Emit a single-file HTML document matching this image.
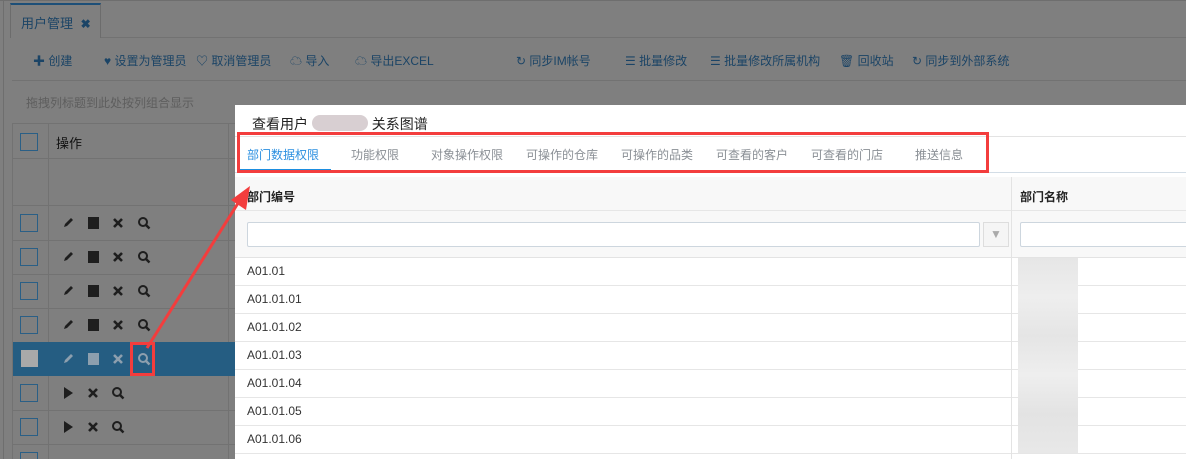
<!DOCTYPE html>
<html><head><meta charset="utf-8"><style>
*{margin:0;padding:0;box-sizing:border-box}
html,body{width:1186px;height:459px;overflow:hidden}
body{background:#7f7f7f;position:relative;font-family:"Liberation Sans","Noto Sans CJK SC",sans-serif;font-size:12px}
.a{position:absolute}
.tb span{position:absolute;top:52px;color:#1b4466;font-size:12px;white-space:nowrap}
.hl{position:absolute;height:1px;background:#727272}
.vl{position:absolute;width:1px;background:#727272}
.cb{position:absolute;left:20px;width:18px;height:18px;border:1px solid #2a5f86}
.ic{position:absolute;width:14px;height:14px}
.tab{position:absolute;top:146px;color:#8a8f95;font-size:12px;white-space:nowrap}
.row{position:absolute;left:235px;width:951px;height:28px;border-bottom:1px solid #e6e6e6}
.row span{position:absolute;left:12px;top:6px;color:#333;font-size:12px}
</style></head><body>
<svg width="0" height="0" style="position:absolute"><defs>
<g id="pen"><path d="M3 11 L4 8 L10 2 L12 4 L6 10 Z" fill="currentColor"/></g>
<g id="sq"><rect x="2" y="1" width="11" height="12" fill="currentColor"/></g>
<g id="x"><path d="M3 3 L11 11 M11 3 L3 11" stroke="currentColor" stroke-width="2.6"/></g>
<g id="mg"><circle cx="6" cy="6" r="4" fill="none" stroke="currentColor" stroke-width="2"/><path d="M9 9 L12.5 12.5" stroke="currentColor" stroke-width="2.4"/></g>
<g id="pl"><path d="M3 1 L12 7 L3 13 Z" fill="currentColor"/></g>
</defs></svg>
<div class="vl" style="left:3px;top:0;height:459px;background:#6e6e6e"></div>
<div class="hl" style="left:0;top:0;width:1186px;background:#6e6e6e"></div>
<div class="a" style="left:10px;top:3px;width:91px;height:35px;border:1px solid #6c6c6c;border-top:2px solid #1d4f78;border-bottom:none;background:#7f7f7f"></div>
<div class="hl" style="left:101px;top:37px;width:1085px"></div>
<div class="a" style="left:21px;top:13px;color:#1b4466;font-size:13px">用户管理 <b style="margin-left:4px;font-size:12px">✖</b></div>
<div class="tb">
<span style="left:33px">✚ 创建</span>
<span style="left:104px">♥ 设置为管理员</span>
<span style="left:196px">♡ 取消管理员</span>
<span style="left:290px">☁ 导入</span>
<span style="left:355px">☁ 导出EXCEL</span>
<span style="left:516px">↻ 同步IM帐号</span>
<span style="left:625px">☰ 批量修改</span>
<span style="left:710px">☰ 批量修改所属机构</span>
<span style="left:839px">🗑 回收站</span>
<span style="left:912px">↻ 同步到外部系统</span>
</div>
<div class="hl" style="left:12px;top:80px;width:1174px"></div>
<div class="a" style="left:26px;top:94px;color:#5e5e5e">拖拽列标题到此处按列组合显示</div>
<div class="hl" style="left:12px;top:123px;width:1174px"></div>
<div class="hl" style="left:12px;top:158px;width:1174px"></div>
<div class="hl" style="left:12px;top:205px;width:1174px"></div>
<div class="vl" style="left:12px;top:123px;height:336px"></div>
<div class="vl" style="left:48px;top:123px;height:336px"></div>
<div class="vl" style="left:228px;top:123px;height:336px"></div>
<div class="cb" style="top:133px"></div>
<div class="a" style="left:56px;top:133px;color:#111;font-size:13px">操作</div>
<div class="hl" style="left:12px;top:240px;width:223px"></div>
<div class="hl" style="left:12px;top:274px;width:223px"></div>
<div class="hl" style="left:12px;top:308px;width:223px"></div>
<div class="hl" style="left:12px;top:342px;width:223px"></div>
<div class="hl" style="left:12px;top:410px;width:223px"></div>
<div class="hl" style="left:12px;top:444px;width:223px"></div>
<div class="a" style="left:13px;top:342px;width:222px;height:34px;background:#255d82"></div>
<svg class="a" style="left:0;top:0;color:#1e1e1e" width="240" height="459">
<g transform="translate(61,216)"><use href="#pen"/></g><g transform="translate(86,216)"><use href="#sq"/></g><g transform="translate(111,216)"><use href="#x"/></g><g transform="translate(137,216)"><use href="#mg"/></g>
<g transform="translate(61,250)"><use href="#pen"/></g><g transform="translate(86,250)"><use href="#sq"/></g><g transform="translate(111,250)"><use href="#x"/></g><g transform="translate(137,250)"><use href="#mg"/></g>
<g transform="translate(61,284)"><use href="#pen"/></g><g transform="translate(86,284)"><use href="#sq"/></g><g transform="translate(111,284)"><use href="#x"/></g><g transform="translate(137,284)"><use href="#mg"/></g>
<g transform="translate(61,318)"><use href="#pen"/></g><g transform="translate(86,318)"><use href="#sq"/></g><g transform="translate(111,318)"><use href="#x"/></g><g transform="translate(137,318)"><use href="#mg"/></g>
<g style="color:#8d9fae"><g transform="translate(61,352)"><use href="#pen"/></g><g transform="translate(86,352)"><use href="#sq"/></g><g transform="translate(111,352)"><use href="#x"/></g><g transform="translate(137,352)"><use href="#mg"/></g></g>
<g transform="translate(61,386)"><use href="#pl"/></g><g transform="translate(86,386)"><use href="#x"/></g><g transform="translate(111,386)"><use href="#mg"/></g>
<g transform="translate(61,420)"><use href="#pl"/></g><g transform="translate(86,420)"><use href="#x"/></g><g transform="translate(111,420)"><use href="#mg"/></g>
</svg>
<div class="cb" style="top:214px"></div>
<div class="cb" style="top:248px"></div>
<div class="cb" style="top:282px"></div>
<div class="cb" style="top:316px"></div>
<div class="a" style="left:21px;top:350px;width:17px;height:17px;background:#a9a9a9"></div>
<div class="cb" style="top:384px"></div>
<div class="cb" style="top:418px"></div>
<div class="cb" style="top:452px"></div>
<!-- modal -->
<div class="a" style="left:235px;top:105px;width:951px;height:354px;background:#fff"></div>
<div class="a" style="left:252px;top:114px;font-size:14px;color:#222">查看用户 <span style="display:inline-block;width:56px;height:16px;background:#d8cfd2;border-radius:8px;vertical-align:-2px"></span> 关系图谱</div>
<div class="hl" style="left:235px;top:136px;width:951px;background:#e3e3e3"></div>
<div class="hl" style="left:235px;top:172px;width:951px;background:#d3dde6"></div>
<div class="a" style="left:240px;top:169px;width:91px;height:3px;background:#1c8ee0"></div>
<span class="tab" style="left:247px;color:#2b8fe0">部门数据权限</span>
<span class="tab" style="left:351px">功能权限</span>
<span class="tab" style="left:431px">对象操作权限</span>
<span class="tab" style="left:526px">可操作的仓库</span>
<span class="tab" style="left:621px">可操作的品类</span>
<span class="tab" style="left:716px">可查看的客户</span>
<span class="tab" style="left:811px">可查看的门店</span>
<span class="tab" style="left:915px">推送信息</span>
<div class="a" style="left:237px;top:132px;width:752px;height:41px;border:3px solid #f33d3d"></div>
<div class="a" style="left:235px;top:177px;width:951px;height:81px;background:#f8f8f8;border-bottom:1px solid #e3e3e3"></div>
<div class="hl" style="left:235px;top:210px;width:951px;background:#e6e6e6"></div>
<div class="a" style="left:247px;top:188px;color:#222;font-weight:bold">部门编号</div>
<div class="a" style="left:1020px;top:188px;color:#222;font-weight:bold">部门名称</div>
<div class="a" style="left:247px;top:222px;width:733px;height:25px;background:#fff;border:1px solid #cdd6de;border-radius:2px"></div>
<div class="a" style="left:983px;top:222px;width:26px;height:25px;background:#f5f5f5;border:1px solid #ddd;color:#aaa;text-align:center;line-height:23px">▼</div>
<div class="a" style="left:1020px;top:222px;width:170px;height:25px;background:#fff;border:1px solid #cdd6de;border-radius:2px"></div>
<div class="row" style="top:258px"><span>A01.01</span></div>
<div class="row" style="top:286px"><span>A01.01.01</span></div>
<div class="row" style="top:314px"><span>A01.01.02</span></div>
<div class="row" style="top:342px"><span>A01.01.03</span></div>
<div class="row" style="top:370px"><span>A01.01.04</span></div>
<div class="row" style="top:398px"><span>A01.01.05</span></div>
<div class="row" style="top:426px"><span>A01.01.06</span></div>
<div class="vl" style="left:1011px;top:177px;height:282px;background:#e3e3e3"></div>
<div class="a" style="left:1018px;top:258px;width:60px;height:195px;background:linear-gradient(#e6e6e6,#eee 20%,#e5e5e5 40%,#eee 60%,#e3e3e3 80%,#e8e8e8)"></div>
<div class="a" style="left:130px;top:342px;width:25px;height:34px;border:3px solid #f33d3d"></div>
<svg class="a" style="left:0;top:0" width="1186" height="459"><line x1="147" y1="348" x2="240" y2="200" stroke="#f33d3d" stroke-width="3"/><polygon points="250,186 246,210 231,200" fill="#f33d3d"/></svg>
</body></html>
